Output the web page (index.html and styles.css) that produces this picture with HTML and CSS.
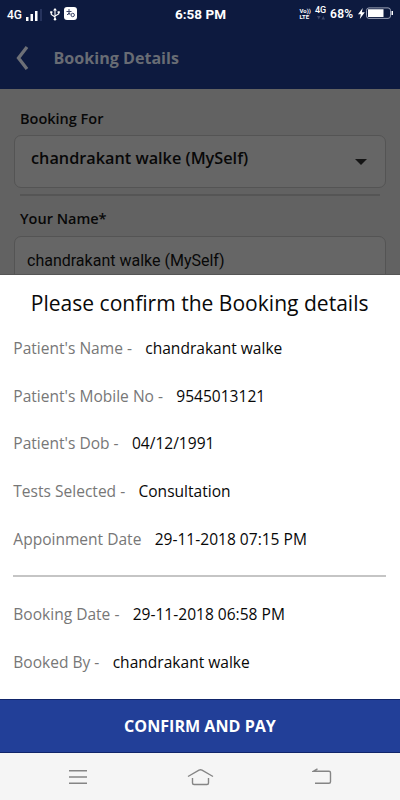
FILE: index.html
```html
<!DOCTYPE html>
<html lang="en">
<head>
<meta charset="utf-8">
<title>Booking Details</title>
<link rel="stylesheet" href="styles.css">
</head>
<body>
<div class="screen">
  <header class="top">
    <div class="status">
      <div class="status-left">
        <span class="net">4G</span>
        <svg class="signal" width="17" height="13" viewBox="0 0 17 13"><path fill="#fff" d="M0 8h2.500v4H0zM4.500 5H7v7H4.500zM9 2h2.500v10H9z"/><path fill="#26335d" d="M14 0h2v12h-2z"/></svg>
        <svg class="usb" width="10" height="13" viewBox="0 0 10 13" fill="none" stroke="#fff" stroke-width="1.1"><path d="M5 1v10M1.300 4v2.500L5 9M8.700 4v2L5 8"/><path fill="#fff" stroke="none" d="M5 0l2 2.500H3zM.2 3.300h2.200v2H.2zM7.600 3.300h2.200v2H7.600z"/><circle cx="5" cy="11.300" r="1.200" fill="#fff" stroke="none"/></svg>
        <svg class="badge" width="13" height="13" viewBox="0 0 13 13"><rect width="13" height="13" rx="3" fill="#fff"/><g fill="none" stroke="#3d4668" stroke-width="1"><path d="M5 2v6M2.500 4.500h5M3 8l2-2 1.500 1"/><circle cx="8.700" cy="8" r="1.700"/></g></svg>
      </div>
      <div class="clock">6:58 PM</div>
      <div class="status-right">
        <div class="volte"><span>Vo))</span><span>LTE</span></div>
        <div class="data"><span>4G</span><svg width="8" height="4" viewBox="0 0 8 4"><path fill="#3c4769" d="M0 0h3.500L1.800 3.500zM4.500 3.500h3.500L6.300 0z"/></svg></div>
        <span class="percent">68%</span>
        <svg class="battery" width="36" height="13" viewBox="0 0 36 13"><path fill="#fff" d="M4.700 1L0 7.300h2.800L1.800 12l5-6.700H3.900z"/><rect x="8.500" y=".9" width="24" height="10.500" rx="2.500" fill="none" stroke="#9ba2b6" stroke-width="1"/><path fill="#fff" d="M10 2.300h15.500V10H10zM33.500 4h1.500v4h-1.500z"/></svg>
      </div>
    </div>
    <div class="bar">
      <svg width="13" height="26" viewBox="0 0 13 26"><path d="M11 2L2.500 13 11 24" fill="none" stroke="#6d7077" stroke-width="3.300"/></svg>
      <h1>Booking Details</h1>
    </div>
  </header>
  <main class="form">
    <label class="label">Booking For</label>
    <div class="field select"><span>chandrakant walke (MySelf)</span><i class="caret"></i></div>
    <div class="rule"></div>
    <label class="label second">Your Name*</label>
    <div class="field input"><span>chandrakant walke (MySelf)</span></div>
  </main>
  <section class="sheet">
    <h2><span>Please confirm the Booking details</span></h2>
    <dl>
      <div class="row"><dt>Patient's Name -</dt><dd>chandrakant walke</dd></div>
      <div class="row"><dt>Patient's Mobile No -</dt><dd>9545013121</dd></div>
      <div class="row"><dt>Patient's Dob -</dt><dd>04/12/1991</dd></div>
      <div class="row"><dt>Tests Selected -</dt><dd>Consultation</dd></div>
      <div class="row"><dt>Appoinment Date</dt><dd>29-11-2018 07:15 PM</dd></div>
    </dl>
    <div class="divider"></div>
    <dl>
      <div class="row"><dt>Booking Date -</dt><dd>29-11-2018 06:58 PM</dd></div>
      <div class="row"><dt>Booked By -</dt><dd>chandrakant walke</dd></div>
    </dl>
  </section>
  <button class="confirm">CONFIRM AND PAY</button>
  <nav class="nav">
    <svg width="18" height="16" viewBox="0 0 18 16"><path d="M0 1.700h18M0 8h18M0 14.300h18" stroke="#858585" stroke-width="1.500"/></svg>
    <svg width="27" height="18" viewBox="0 0 27 18"><path d="M1 8.500L12 2.200q1.500-.8 3 0l11 6.300M5.500 10v5q0 1.500 1.500 1.500h13q1.500 0 1.500-1.500v-5" fill="none" stroke="#858585" stroke-width="1.400"/></svg>
    <svg width="20" height="17" viewBox="0 0 20 17"><path d="M5.500.8L1.500 3.200H17q1.500 0 1.500 1.500v9q0 1.500-1.500 1.500H3" fill="none" stroke="#858585" stroke-width="1.400"/></svg>
  </nav>
</div>
</body>
</html>
```
FILE: styles.css
```css
* { box-sizing: border-box; }
body { margin: 0; font-family: "Open Sans", sans-serif; }
h1, h2, dl, dd { margin: 0; }
svg { display: block; flex: none; }
.screen { width: 400px; height: 800px; overflow: hidden; display: flex; flex-direction: column; background: #fff; white-space: nowrap; }
.top { height: 89px; flex: none; background: #0d1a3f; }
.status { height: 28px; display: grid; grid-template-columns: 1fr auto 1fr; align-items: center; padding: 0 6px 0 7px; color: #fff; font-family: Roboto, sans-serif; }
.status-left { display: flex; align-items: center; }
.net { font-size: 12px; font-weight: 500; width: 19px; padding-top: 2px; }
.signal { margin-top: 3px; }
.usb { margin-left: 7px; }
.badge { margin-left: 4px; margin-top: -2px; }
.clock { font-size: 13.5px; font-weight: 700; }
.status-right { display: flex; align-items: center; justify-content: flex-end; }
.volte { display: flex; flex-direction: column; width: 15.5px; font-size: 6px; line-height: 6px; font-weight: 700; }
.data { width: 15px; display: flex; flex-direction: column; height: 19px; font-size: 9px; line-height: 11px; font-weight: 500; }
.data svg { margin: 0 0 0 2px; }
.percent { width: 28px; font-size: 12px; font-weight: 600; letter-spacing: .3px; }
.battery { margin-top: -1px; }
.bar { height: 60px; padding-left: 16px; display: flex; align-items: center; }
h1 { margin-left: 24.5px; font-size: 16.1px; line-height: 22px; font-weight: 700; color: #686c74; }
.form { height: 186px; flex: none; overflow: hidden; background: #626262; padding: 19px 14px 0; border-bottom: 1px solid #555; color: #080808; }
.label { display: block; margin-left: 6px; font-size: 14.5px; line-height: 22px; font-weight: 550; height: 27px; }
.field { height: 53px; border: 1px solid #545454; border-radius: 7px; background: #666; }
.select { display: flex; justify-content: space-between; padding: 10px 18px 0 16px; font-size: 16.250px; line-height: 24px; font-weight: 560; }
.caret { margin-top: 13px; width: 12px; height: 6px; background: #151515; clip-path: polygon(0 0, 100% 0, 50% 100%); }
.rule { height: 2px; margin: 6px 6px 0; background: #555; }
.second { margin-top: 12px; margin-bottom: 1px; }
.input { padding: 12px 12px; font-family: Roboto, sans-serif; font-size: 16px; line-height: 24px; }
.sheet { height: 424px; flex: none; padding: 13px 14px 0 13.3px; }
h2 { font-size: 21.05px; line-height: 30px; font-weight: 400; text-align: center; color: #090909; margin-bottom: 6px; }
.row { height: 47.75px; display: flex; align-items: center; font-size: 15.56px; line-height: 22px; }
dt { color: #777; }
dd { margin-left: 13.3px; color: #080808; }
.divider { height: 2px; margin: 12.300px 0 13.300px; background: #c5c5c5; }
.confirm { height: 54px; flex: none; border: 0; border-top: 1px solid #11256a; border-bottom: 1px solid #11256a; padding: 0; background: #223f98; color: #fff; font: 700 16.1px "Open Sans", sans-serif; }
.nav { flex: 1; background: #f5f5f5; display: flex; align-items: center; padding-left: 69px; }
.nav svg:nth-child(2) { margin-left: 100px; }
.nav svg:nth-child(3) { margin-left: 98px; }
```
